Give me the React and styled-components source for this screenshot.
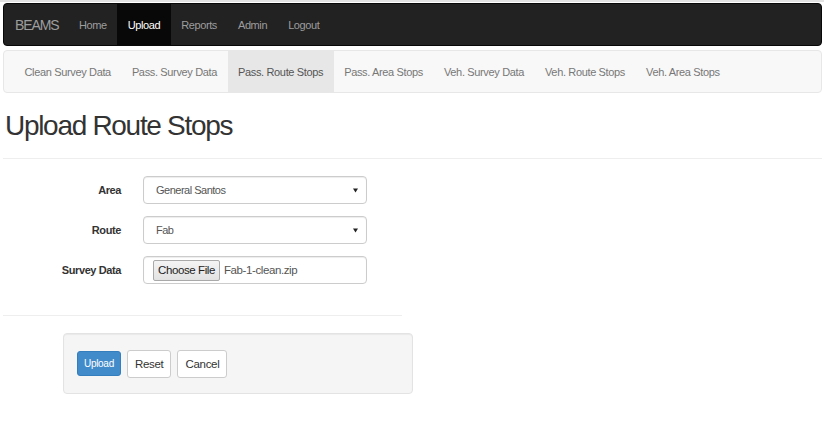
import React from "react";
import styled, { createGlobalStyle } from "styled-components";

const GlobalStyle = createGlobalStyle`
  html, body {
    margin: 0;
    padding: 0;
    background: #fff;
  }
  body {
    font-family: "Liberation Sans", Arial, sans-serif;
    color: #333;
    border-top: 2px solid #e2e2e2;
  }
  * { box-sizing: border-box; }
`;

const mainLinks = ["Home", "Upload", "Reports", "Admin", "Logout"];
const subLinks = [
  "Clean Survey Data",
  "Pass. Survey Data",
  "Pass. Route Stops",
  "Pass. Area Stops",
  "Veh. Survey Data",
  "Veh. Route Stops",
  "Veh. Area Stops",
];

const App = () => {
  return (
    <Page>
      <GlobalStyle />
      <Navbar>
        <Brand>BEAMS</Brand>
        {mainLinks.map((l) => (
          <NavLink key={l} active={l === "Upload"}>{l}</NavLink>
        ))}
      </Navbar>
      <SubNav>
        {subLinks.map((l) => (
          <SubLink key={l} active={l === "Pass. Route Stops"}>{l}</SubLink>
        ))}
      </SubNav>
      <Title>Upload Route Stops</Title>
      <Rule />
      <Form>
        <Row>
          <Label>Area</Label>
          <SelectWrap>
            <Select defaultValue="gs">
              <option value="gs">General Santos</option>
            </Select>
            <Caret viewBox="0 0 6 5"><path d="M0 0h6L3 5z" /></Caret>
          </SelectWrap>
        </Row>
        <Row>
          <Label>Route</Label>
          <SelectWrap>
            <Select defaultValue="fab">
              <option value="fab">Fab</option>
            </Select>
            <Caret viewBox="0 0 6 5"><path d="M0 0h6L3 5z" /></Caret>
          </SelectWrap>
        </Row>
        <Row>
          <Label>Survey Data</Label>
          <FileBox>
            <FileButton>Choose File</FileButton>
            <FileName>Fab-1-clean.zip</FileName>
          </FileBox>
        </Row>
      </Form>
      <Rule short />
      <Panel>
        <Button primary>Upload</Button>
        <Button>Reset</Button>
        <Button>Cancel</Button>
      </Panel>
    </Page>
  );
};
export default App;

const Page = styled.div`
  padding: 1px 2px 0 3px;
`;

const Navbar = styled.nav`
  display: flex;
  align-items: stretch;
  height: 43px;
  background: #222;
  border: 1px solid #080808;
  border-radius: 4px;
  overflow: hidden;
`;

const Brand = styled.span`
  display: flex;
  align-items: center;
  padding: 0 10px 0 11px;
  color: #9d9d9d;
  font-size: 14px;
  letter-spacing: -1.1px;
`;

const NavLink = styled.span`
  display: flex;
  align-items: center;
  padding: 0 10.5px;
  font-size: 11px;
  letter-spacing: -0.4px;
  color: ${(p) => (p.active ? "#fff" : "#9d9d9d")};
  background: ${(p) => (p.active ? "#080808" : "transparent")};
`;

const SubNav = styled.nav`
  display: flex;
  align-items: stretch;
  margin-top: 4px;
  height: 43px;
  padding-left: 10px;
  background: #f8f8f8;
  border: 1px solid #e7e7e7;
  border-radius: 4px;
`;

const SubLink = styled.span`
  display: flex;
  align-items: center;
  padding: 0 10.5px;
  font-size: 11px;
  letter-spacing: -0.35px;
  white-space: nowrap;
  color: ${(p) => (p.active ? "#555" : "#777")};
  background: ${(p) => (p.active ? "#e7e7e7" : "transparent")};
`;

const Title = styled.h1`
  margin: 16px 0 0 2px;
  font-size: 28px;
  letter-spacing: -1.3px;
  font-weight: 400;
  line-height: 34px;
  color: #333;
`;

const Rule = styled.hr`
  margin: 15px 0 0;
  border: 0;
  border-top: 1px solid #eee;
  width: ${(p) => (p.short ? "399px" : "100%")};
  ${(p) => p.short && "margin-top: 31px;"}
`;

const Form = styled.div`
  display: flex;
  flex-direction: column;
  gap: 12px;
  margin-top: 17px;
`;

const Row = styled.div`
  display: grid;
  grid-template-columns: 118px 224px;
  column-gap: 22px;
  align-items: center;
`;

const Label = styled.label`
  text-align: right;
  font-size: 11px;
  letter-spacing: -0.4px;
  font-weight: 700;
  color: #333;
`;

const SelectWrap = styled.div`
  position: relative;
  height: 28px;
`;

const Select = styled.select`
  appearance: none;
  width: 100%;
  height: 28px;
  padding: 0 12px;
  font-family: "Liberation Sans", Arial, sans-serif;
  font-size: 11px;
  letter-spacing: -0.5px;
  color: #555;
  background: #fff;
  border: 1px solid #ccc;
  border-radius: 4px;
  box-shadow: inset 0 1px 1px rgba(0, 0, 0, 0.075);
  outline: 0;
`;

const Caret = styled.svg`
  position: absolute;
  right: 9px;
  top: 12px;
  width: 5px;
  height: 5px;
  fill: #222;
  pointer-events: none;
`;

const FileBox = styled.div`
  display: flex;
  align-items: center;
  gap: 4px;
  height: 28px;
  padding: 0 9px;
  background: #fff;
  border: 1px solid #ccc;
  border-radius: 4px;
  box-shadow: inset 0 1px 1px rgba(0, 0, 0, 0.075);
`;

const FileButton = styled.span`
  display: flex;
  align-items: center;
  height: 21px;
  padding: 0 4px;
  font-size: 11.5px;
  letter-spacing: -0.4px;
  color: #222;
  background: linear-gradient(#f4f4f4, #e2e2e2);
  border: 1px solid #a9a9a9;
  border-radius: 2px;
`;

const FileName = styled.span`
  font-size: 11.5px;
  letter-spacing: -0.4px;
  color: #555;
`;

const Panel = styled.div`
  display: flex;
  align-items: center;
  gap: 6px;
  width: 350px;
  height: 61px;
  margin: 17px 0 0 60px;
  padding: 0 13px;
  background: #f5f5f5;
  border: 1px solid #e3e3e3;
  border-radius: 4px;
  box-shadow: inset 0 1px 1px rgba(0, 0, 0, 0.05);
`;

const Button = styled.button`
  height: ${(p) => (p.primary ? "25px" : "28px")};
  padding: ${(p) => (p.primary ? "0 6px" : "0 7px")};
  font-family: "Liberation Sans", Arial, sans-serif;
  font-size: ${(p) => (p.primary ? "10px" : "11.5px")};
  letter-spacing: -0.3px;
  color: ${(p) => (p.primary ? "#fff" : "#333")};
  background: ${(p) => (p.primary ? "#428bca" : "#fff")};
  border: 1px solid ${(p) => (p.primary ? "#357ebd" : "#ccc")};
  border-radius: 3px;
  cursor: pointer;
`;
